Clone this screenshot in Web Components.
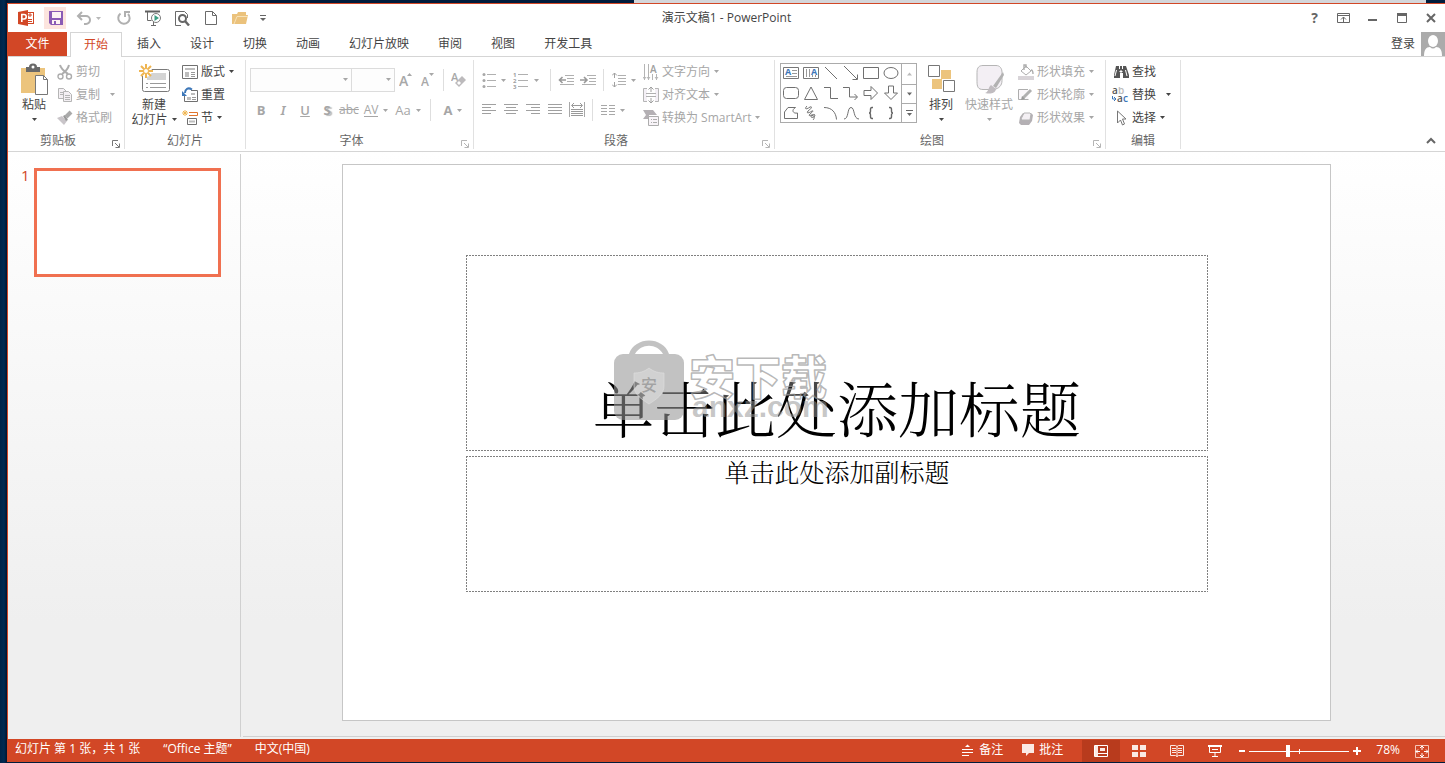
<!DOCTYPE html>
<html lang="zh-CN">
<head>
<meta charset="utf-8">
<title>演示文稿1 - PowerPoint</title>
<style>
  body {
    margin: 0;
    font: 12px/16px "Open Sans", "Noto Sans CJK SC", sans-serif;
    color: #444;
    background: #001c3c;
  }
</style>
</head>
<body>
<ppt-desktop></ppt-desktop>
<script>
/* Icon table: name -> [width, height, markup] */
const ICONS = {
  logo: [16, 16, '<rect x="8.500" y="2.500" width="7" height="11" fill="#fff" stroke="#d24726"/><path d="M10 5h4M10 9.500h4M10 11.500h4M12 3v4" stroke="#d24726" fill="none"/><path d="M0 2 10 0v16L0 14z" fill="#d24726"/><path d="M3.800 12V4.500h2.200a2 2 0 0 1 0 4.500H4" fill="none" stroke="#fff" stroke-width="1.600"/>'],
  save: [16, 16, '<path d="M1 1h14v14H3l-2-2z" fill="#8a5bb5"/><rect x="4" y="2" width="9" height="6" fill="#fdf3f3"/><rect x="4" y="10" width="8" height="4" fill="#fdf3f3"/><rect x="6" y="11" width="2" height="3" fill="#8a5bb5"/>'],
  undo: [16, 16, '<path d="M6 2 2 6l4 4M2.500 6H10a3.500 3.500 0 0 1 0 8H8" fill="none" stroke="#b0b0b0" stroke-width="2"/>'],
  redo: [16, 16, '<path d="M4.500 3.500A5.700 5.700 0 1 0 12 4" fill="none" stroke="#b0b0b0" stroke-width="2"/><path d="M9 7V2h5" fill="none" stroke="#b0b0b0" stroke-width="2"/>'],
  present: [18, 16, '<path d="M1 1.500h15" stroke="#5f5f5f" stroke-width="2"/><path d="M3.500 2v8.500h4M7 15.500h5M9.500 12v3" fill="none" stroke="#6a6a6a"/><circle cx="12" cy="8" r="4.500" fill="#fff" stroke="#7a7a7a"/><path d="M10.500 5v6l4.500-3z" fill="#3b9e83"/>'],
  preview: [16, 16, '<path d="M13.500 8V4.500l-3-3H1.500v14H7" fill="#fff" stroke="#6a6a6a"/><circle cx="8.500" cy="8.500" r="3.500" fill="#fff" stroke="#666" stroke-width="2"/><path d="m11 11 4 4.500" stroke="#666" stroke-width="2.400"/>'],
  page: [14, 16, '<path d="M1.500 1.500h7l4 4v9h-11zM8.500 1.500v4h4" fill="#fff" stroke="#6a6a6a"/>'],
  open: [18, 16, '<path d="M1 14V4h5l1-2h8v3h2l-2 9z" fill="#ebc27c"/><path d="M3 14 6 6.500h11" fill="none" stroke="#f7e2b8"/>'],
  more: [6, 8, '<path d="M0 1.500h6" stroke="#666"/><path d="M0 4h6L3 7z" fill="#666"/>'],
  optsRibbon: [13, 12, '<path d="M.5 1.500h12v9H.5zM.5 3.500h12M6.500 10V5M4 7.500l2.500-2.500L9 7.500" fill="none" stroke="#666"/>'],
  minimize: [12, 12, '<path d="M1 8h9" stroke="#666" stroke-width="2"/>'],
  maximize: [12, 12, '<path d="M1.500 1.500h9v9h-9z" fill="none" stroke="#666"/><path d="M1 2.500h10" stroke="#666" stroke-width="3"/>'],
  close: [12, 12, '<path d="m2 2 8 8M10 2l-8 8" stroke="#666" stroke-width="2"/>'],
  avatar: [24, 24, '<path d="M0 0h24v24H0z" fill="#ababab"/><ellipse cx="12" cy="9" rx="5" ry="6" fill="#fff"/><path d="M3 24c0-6 2-9 6-9 2 2 4 2 6 0 4 0 6 3 6 9z" fill="#fff"/>'],
  paste: [29, 32, '<path d="M1 5h24v25H1z" fill="#ecc47d"/><path d="M6 4h3a4 3.500 0 0 1 8 0h3v5H6z" fill="#696969"/><circle cx="13" cy="4" r="1.500" fill="#fff"/><path d="M15.500 12.500h8l4 4v15h-12z" fill="#fff" stroke="#777"/><path d="M23.500 12.500v4h4" fill="none" stroke="#777"/>'],
  cut: [16, 16, '<path d="M3 1c1 4 4 6 8 9M12 1C11 5 8 8 5 10" fill="none" stroke="#adadad" stroke-width="2"/><circle cx="3.500" cy="12.500" r="2.500" fill="#fff" stroke="#adadad" stroke-width="1.400"/><circle cx="12" cy="12.500" r="2.500" fill="#fff" stroke="#adadad" stroke-width="1.400"/>'],
  copy: [16, 16, '<path d="M1.500 1.500h5l3 3v7h-8z" fill="#f4f0f4" stroke="#b5b5b5"/><path d="M3 5.500h4M3 7.500h4" stroke="#b5b5b5"/><path d="M6.500 4.500h5l3 3v7h-8z" fill="#f4f0f4" stroke="#b5b5b5"/><path d="M8 8.500h5M8 10.500h5M8 12.500h5" stroke="#b5b5b5"/>'],
  brush: [16, 16, '<path d="m0 8 5-2 5 5-3 4z" fill="#c9c5c9"/><path d="m6 6 3 5 2-1-3-5z" fill="#999"/><path d="m9 7 5-5" stroke="#aaa" stroke-width="4"/>'],
  newSlide: [31, 30, '<rect x="3.500" y="5.500" width="27" height="22" rx="2" fill="#fff" stroke="#7a7a7a"/><path d="M8 9h19v7H8z" fill="#d4d4d4"/><path d="M7 19.500h2M11 19.500h16M7 23.500h2M11 23.500h16" stroke="#999"/><circle cx="7" cy="7" r="6" fill="#fff"/><path d="M7 0v14M0 7h14M2 2l10 10M12 2 2 12" stroke="#efb551" stroke-width="2"/><circle cx="7" cy="7" r="2.500" fill="#fff" stroke="#efb551"/>'],
  layout: [16, 16, '<path d="M.5 1.500h15v13H.5z" fill="#fff" stroke="#707070"/><path d="M3 4h10v2H3zM3 8h4v5H3z" fill="#bdbdbd"/><path d="M9 8.500h4M9 10.500h4M9 12.500h4" stroke="#999"/>'],
  reset: [16, 16, '<path d="M9 3.500h6.500v11h-13V9" fill="#fff" stroke="#707070"/><path d="M9 6h4v2H9zM5 10h4v3H5z" fill="#bdbdbd"/><path d="M10 10.500h4M10 12.500h4" stroke="#999"/><path d="M10 2.500C6 0 3 2 3 6" fill="none" stroke="#3d77b8" stroke-width="2"/><path d="M0 4v5h5z" fill="#3d77b8"/>'],
  section: [16, 16, '<path d="M3 0v6M0 3h6M1 1l4 4M5 1 1 5" stroke="#efb551"/><path d="M7 2.500h8.500v3H7" fill="none" stroke="#e0752d"/><path d="M5.500 8.500h9v6h-9z" fill="#fff" stroke="#707070"/><path d="M7 11.500h6" stroke="#bdbdbd" stroke-width="2"/>'],
  grow: [14, 16, '<text x="0" y="14" font-size="14" font-weight="600" fill="#a8a8a8">A</text><path d="M8 4h5l-2.500-3z" fill="#a8a8a8"/>'],
  shrink: [14, 16, '<text x="0" y="14" font-size="12" font-weight="600" fill="#a8a8a8">A</text><path d="M8 1h5l-2.500 3z" fill="#a8a8a8"/>'],
  eraser: [16, 16, '<text x="0" y="9" font-size="11" font-weight="600" fill="#a8a8a8">A</text><path d="m4 11 7-7 4 4-7 7z" fill="#bcbabc"/><path d="m6 11 2-2 2 2-2 2z" fill="#fff"/>'],
  bullets: [14, 16, '<g fill="#a8a8a8"><circle cx="2" cy="2.500" r="1.500"/><circle cx="2" cy="8.500" r="1.500"/><circle cx="2" cy="14.500" r="1.500"/></g><path d="M5 2.500h9M5 8.500h9M5 14.500h9" stroke="#b0b0b0"/>'],
  numbers: [16, 18, '<g font-size="6" font-weight="700" fill="#a0a0a0"><text x="0" y="6">1</text><text x="0" y="12">2</text><text x="0" y="18">3</text></g><path d="M5 3.500h10M5 9.500h10M5 15.500h10" stroke="#b0b0b0"/>'],
  outdent: [16, 12, '<path d="M7 1.500h9M9 4.500h7M9 7.500h7M2 10.500h14" stroke="#b0b0b0"/><path d="M1 6h7M4.500 3 1.500 6l3 3" fill="none" stroke="#999" stroke-width="1.600"/>'],
  indent: [16, 12, '<path d="M7 1.500h9M9 4.500h7M9 7.500h7M2 10.500h14" stroke="#b0b0b0"/><path d="M0 6h7M4 3l3 3-3 3" fill="none" stroke="#999" stroke-width="1.600"/>'],
  spacing: [14, 16, '<path d="M6 3.500h8M6 6.500h8M6 9.500h8M6 12.500h8" stroke="#b0b0b0"/><path d="M2.500 1v5M0 3.500 2.500 1 5 3.500M2.500 10v5M0 12.500 2.500 15 5 12.500" fill="none" stroke="#a0a0a0"/>'],
  left: [14, 12, '<path d="M0 .5h14M0 3.500h9M0 6.500h14M0 9.500h9" stroke="#a0a0a0"/>'],
  center: [14, 12, '<path d="M0 .5h14M2 3.500h10M0 6.500h14M2 9.500h10" stroke="#a0a0a0"/>'],
  right: [14, 12, '<path d="M0 .5h14M5 3.500h9M0 6.500h14M5 9.500h9" stroke="#a0a0a0"/>'],
  justify: [14, 12, '<path d="M0 .5h14M0 3.500h14M0 6.500h14M0 9.500h14" stroke="#a0a0a0"/>'],
  distribute: [16, 16, '<path d="M.5 0v15M15.500 0v15" stroke="#a8a8a8"/><path d="M3 3.500h10M5 1 2.500 3.500 5 6M11 1l2.500 2.500L11 6" fill="none" stroke="#999"/><path d="M2 7.500h12M2 9.500h12M2 11.500h12M2 13.500h12" stroke="#999"/>'],
  columns: [14, 12, '<path d="M0 1.500h6M0 4.500h6M0 7.500h6M0 10.500h6M8 1.500h6M8 4.500h6M8 7.500h6M8 10.500h6" stroke="#a8a8a8"/>'],
  direction: [16, 16, '<path d="M1.500 0v16M5.500 0v16M9.500 10v6M13.500 10v6" stroke="#b5b5b5"/><text x="7" y="9" font-size="10" font-weight="600" fill="#a0a0a0">A</text><path d="m0 13 1.500 2L3 13M4 13l1.500 2L7 13M12 13l1.500 2 1.500-2" fill="none" stroke="#b5b5b5"/>'],
  align: [16, 16, '<path d="M4 1.500H.5v13H4M12 1.500h3.500v13H12" fill="#f4f0f6" stroke="#b5b5b5"/><path d="M8 0v5M5.500 2.500 8 0l2.500 2.500M8 16v-5M5.500 13.500 8 16l2.500-2.500" fill="none" stroke="#a0a0a0"/><path d="M3 6.500h10M3 9.500h10" stroke="#b0b0b0"/>'],
  smartart: [16, 16, '<path d="M0 0h10l4 5H6v4H0l3-4z" fill="#b4b0b4"/><path d="M5.500 6.500h10v9h-10z" fill="#f8f4f8" stroke="#adadad"/><path d="M8 9.500h1M10 9.500h4M8 12.500h1M10 12.500h4" stroke="#adadad"/>'],
  tbox: [16, 14, '<path d="M.5 1.500h15v11H.5z" fill="#fff" stroke="#777"/><text x="2" y="9" font-size="9" font-weight="700" fill="#3d77b8">A</text><path d="M9 4.500h5M9 7.500h5M3 10.500h11" stroke="#999"/>'],
  vbox: [16, 14, '<path d="M.5 1.500h15v11H.5z" fill="#fff" stroke="#777"/><path d="M3.500 3v8M6.500 3v8M9.500 9v2M12.500 9v2" stroke="#999"/><text x="8" y="9" font-size="9" font-weight="700" fill="#3d77b8">A</text>'],
  line: [16, 16, '<path d="m2 2 12 12" stroke="#707070"/>'],
  arrow: [16, 16, '<path d="m1 1 13 13M14.500 9.500v5h-5" fill="none" stroke="#707070"/>'],
  rect: [16, 16, '<path d="M.5 2.500h15v11H.5z" fill="none" stroke="#707070"/>'],
  oval: [16, 16, '<ellipse cx="8" cy="8" rx="7" ry="5.500" fill="none" stroke="#707070"/>'],
  round: [16, 16, '<rect x=".5" y="2.500" width="15" height="11" rx="3" fill="none" stroke="#707070"/>'],
  triangle: [16, 16, '<path d="M8 2 14.500 14.500h-13z" fill="none" stroke="#707070"/>'],
  elbow: [16, 16, '<path d="M1 2.500h6.500v11H15" fill="none" stroke="#707070"/>'],
  elbowArrow: [16, 16, '<path d="M0 2.500h6.500v9.500H14M11.500 9l3 3-3 3" fill="none" stroke="#707070"/>'],
  rightArrow: [16, 16, '<path d="M1 5.500h7V1.500l6.500 6.500L8 14.500v-4H1z" fill="none" stroke="#707070"/>'],
  downArrow: [16, 16, '<path d="M5.500 1v7h-4L8 14.500 14.500 8h-4V1z" fill="none" stroke="#707070"/>'],
  freeform: [16, 16, '<path d="M5 2.500h7.500C8 5 10 9 14.500 8v5.500h-13V7z" fill="none" stroke="#707070"/>'],
  scribble: [16, 16, '<path d="M4 1C1 4 3 5 7 2c3-1 1 2-2 4-2 3 1 2 4 0 3-1-2 3-3 4 0 2 5-2 6 0 0 3-5 3-4 1 2-2 5 1 2 4" fill="none" stroke="#707070"/>'],
  arc: [16, 16, '<path d="M1 2.500c8 0 12 5 12.500 12" fill="none" stroke="#707070"/>'],
  curve: [16, 16, '<path d="M1 14C6 14 4 2.500 8 2.500S10 14 16 14" fill="none" stroke="#707070"/>'],
  lbrace: [16, 16, '<path d="M10 2.500H9Q7.500 2.500 7.500 4.500V6Q7.500 8 6 8 7.500 8 7.500 10v1.500q0 2 1.500 2h1" fill="none" stroke="#666" stroke-width="1.400"/>'],
  rbrace: [16, 16, '<path d="M6 2.500h1q1.500 0 1.500 2V6q0 2 1.500 2-1.500 0-1.500 2v1.500q0 2-1.500 2H6" fill="none" stroke="#666" stroke-width="1.400"/>'],
  up: [7, 6, '<path d="M1 4.500h5l-2.500-3z" fill="#bbb"/>'],
  down: [7, 6, '<path d="M1 1.500h5l-2.500 3z" fill="#666"/>'],
  expand: [7, 8, '<path d="M0 1.500h7" stroke="#666"/><path d="M1 4h5L3.500 7z" fill="#666"/>'],
  arrange: [28, 28, '<path d="M14 5h10v9H14zM5 14h10v10H5z" fill="#ecc47d"/><path d="M1.500.5h11v11h-11zM16.500 15.500h11v11h-11z" fill="#fff" stroke="#777"/>'],
  styles: [30, 32, '<path d="M9 2.500h13c4 0 6 3 6 7v8c0 5-3 8-8 9H9c-5 0-6-3-6-8v-9c0-5 2-7 6-7z" fill="#f3eff4" stroke="#b5b5b5"/><path d="M29 9 19 23l3 2 8-13z" fill="#b2b2b2"/><path d="m17 22 5 4c-1 5-6 5-11 4 4-1 3-6 6-8z" fill="#c0bcc0"/>'],
  fill: [16, 16, '<path d="M0 12h16v4H0z" fill="#d8d4d8"/><path d="m3 7 5-5 5 5-5 4z" fill="#fff" stroke="#adadad"/><path d="M6 6V1h2v3M13 6c2 0 2 2 2 4" fill="none" stroke="#adadad" stroke-width="1.400"/>'],
  outline: [16, 16, '<path d="M10 2.500H.5v10h10" fill="#faf7fa" stroke="#adadad"/><path d="m5 11 8-8" stroke="#b0b0b0" stroke-width="3"/><path d="m3 13 1-4 3 3z" fill="#999"/>'],
  effects: [16, 16, '<path d="M5 3h8l2 2-1 6-3 4H3l-2-2 1-6z" fill="#b4b0b4"/><path d="M6 3h6l1 1-1 6H4L3 9z" fill="#f4f0f4" stroke="#b4b4b4"/>'],
  find: [16, 16, '<path d="M3 2h3v3h1V2h2v3h1V2h3l3 9v3h-6v-5H7v5H1v-3z" fill="#555"/><path d="M3.500 6 2 12M12.500 6 14 12M7 7v1h2V7z" stroke="#fff" fill="#fff"/>'],
  replace: [18, 16, '<g font-size="10" font-weight="600"><text x="0" y="7" fill="#555">a</text><text x="6" y="7" fill="#bbb">b</text><text x="5" y="15" fill="#555">a</text><text x="11" y="15" fill="#3d77b8">c</text></g><path d="M.5 9v3h3M2 10l2 2-2 2" stroke="#3d77b8" fill="none"/>'],
  select: [16, 16, '<path d="M4.500 1v12l3-3 2 5 2-1-2-5h3.500z" fill="#fff" stroke="#777"/>'],
  launcher: [8, 8, '<path d="M.5 6V.5H6M3 3l4 4M7.500 3.500v4h-4" fill="none" stroke="currentColor"/>'],
  collapse: [10, 8, '<path d="m1 6 4-4 4 4" fill="none" stroke="#666" stroke-width="2"/>'],
  notes: [12, 12, '<path d="M0 5.500h11M0 8.500h11M0 11.500h7" stroke="#fff"/><path d="M3 3h5L5.500.500z" fill="#fff"/>'],
  comment: [12, 12, '<path d="M0 0h12v9H7l-3 3V9H0z" fill="#fbe9e4"/>'],
  normal: [14, 14, '<path d="M.5 1.500h13v11H.5zM4 9.500h9" fill="none" stroke="#fff"/><path d="M1 2h3v10H1zM6 4h5v3H6z" fill="#fbe9e4"/>'],
  sorter: [14, 12, '<path d="M0 0h6v5H0zM8 0h6v5H8zM0 7h6v5H0zM8 7h6v5H8z" fill="#fbe9e4"/>'],
  reading: [14, 12, '<path d="M.5.500h5L7 1.500 8.500.500h5v10h-5L7 11.500l-1.500-1h-5zM7 1v11M2 3.500h4M2 5.500h4M2 7.500h4M8 3.500h4M8 5.500h4M8 7.500h4" fill="none" stroke="#fbe9e4"/>'],
  show: [14, 12, '<path d="M0 1h14" stroke="#fff" stroke-width="2"/><path d="M1.500 2v5.500h11V2M7 8v3M4 11.500h6M4 4.500h6" fill="none" stroke="#fff"/>'],
  minus: [6, 6, '<path d="M0 3h6" stroke="#fff" stroke-width="2"/>'],
  plus: [8, 8, '<path d="M0 4h8M4 0v8" stroke="#fff" stroke-width="2"/>'],
  fit: [14, 14, '<path d="M.5 1.500h13v12H.5z" fill="none" stroke="#f5c5b8"/><path d="M7 2v4M7 9v4M1 7.500h4M9 7.500h4M5 4l2-2 2 2M5 11l2 2 2-2M3 5.500l-2 2 2 2M11 5.500l2 2-2 2" fill="none" stroke="#fff"/>']
};

/* Registers an element whose shadow root is filled by render(host). */
function define(name, render) {
  customElements.define(name, class extends HTMLElement {
    connectedCallback() {
      if (this.shadowRoot) return;
      this.attachShadow({ mode: 'open' }).innerHTML = render(this);
    }
  });
}
const icon = name => `<ppt-icon name="${name}"></ppt-icon>`;
const BUTTON = `
  button { font: inherit; color: inherit; background: none; border: 0; padding: 0; margin: 0;
    display: flex; align-items: center; justify-content: center; white-space: nowrap; }
`;

define('ppt-icon', host => {
  const [w, h, body] = ICONS[host.getAttribute('name')];
  return `<style>:host { display: block; flex: none; } svg { display: block; }</style>
    <svg width="${w}" height="${h}" viewBox="0 0 ${w} ${h}" aria-hidden="true">${body}</svg>`;
});

define('ppt-caret', () => `
  <style>:host { display: block; flex: none; } svg { display: block; }</style>
  <svg width="5" height="3" viewBox="0 0 5 3" aria-hidden="true"><path d="M0 0h5L2.500 3z" fill="currentColor"/></svg>`);

/* Compact command without visible label, or with a letter as its face */
define('icon-button', host => `
  <style>
    :host { display: block; flex: none; color: #666; }
    ${BUTTON}
    button { width: var(--w, 22px); height: var(--h, 22px); gap: 5px; }
  </style>
  <button type="button" aria-label="${host.getAttribute('label')}" ${host.hasAttribute('disabled') ? 'disabled' : ''}>
    <slot></slot>${host.hasAttribute('menu') ? '<ppt-caret></ppt-caret>' : ''}
  </button>`);

/* Icon beside a label */
define('tool-button', host => `
  <style>
    :host { display: block; }
    :host([disabled]) { color: #a6a6a6; }
    ${BUTTON}
    button { height: 23px; gap: 3px; justify-content: flex-start; }
    .icon { width: 16px; display: flex; justify-content: center; }
    ppt-caret { margin-left: var(--caret-gap, 1px); }
  </style>
  <button type="button" ${host.hasAttribute('disabled') ? 'disabled' : ''}>
    <span class="icon">${icon(host.getAttribute('icon'))}</span>
    <slot></slot>${host.hasAttribute('menu') ? '<ppt-caret></ppt-caret>' : ''}
  </button>`);

/* Large icon above a label of one or two lines */
define('big-button', host => `
  <style>
    :host { display: block; flex: none; width: var(--big-width, 48px); }
    :host([disabled]) { color: #a6a6a6; }
    ${BUTTON}
    button { width: 100%; flex-direction: column; }
    .icon { height: 37px; display: flex; align-items: center; }
    .row { height: 15px; display: flex; align-items: center; gap: 4px; }
  </style>
  <button type="button" ${host.hasAttribute('disabled') ? 'disabled' : ''}>
    <span class="icon">${icon(host.getAttribute('icon'))}</span>
    <span class="row"><slot></slot></span>
    <span class="row"><slot name="second"></slot><ppt-caret></ppt-caret></span>
  </button>`);

define('ribbon-group', host => `
  <style>
    :host { display: grid; grid-template-rows: 73px 16px; flex: none; box-sizing: border-box;
      width: var(--group-width); border-right: 1px solid #e1e1e1; }
    .body { display: flex; align-items: flex-start; padding-left: var(--pad, 4px); }
    .foot { display: flex; color: #666; }
    .label { flex: 1; text-align: center; }
    ${BUTTON}
    button { width: 16px; height: 16px; padding-top: 6px; color: ${host.hasAttribute('dim') ? '#b5b5b5' : '#777'}; }
  </style>
  <div class="body"><slot></slot></div>
  <div class="foot"><span class="label">${host.getAttribute('label')}</span>
    ${host.hasAttribute('launcher') ? `<button type="button" aria-label="${host.getAttribute('label')}">${icon('launcher')}</button>` : ''}
  </div>`);

define('title-bar', () => `
  <style>
    :host { display: grid; grid-template-columns: 1fr auto 1fr; align-items: center; height: 28px; }
    .quick { display: flex; align-items: center; gap: 11px; padding-left: 10px; }
    .quick ppt-icon:first-child { margin-right: -1px; }
    .quick icon-button { --w: 18px; }
    .quick .save { --w: 22px; background: #fce4de; }
    .quick .undo { --w: 26px; color: #b8b8b8; margin: 0 2px 0 -2px; }
    .quick .more { --w: 6px; }
    h1 { margin: 0; font: inherit; }
    .sys { display: flex; justify-content: flex-end; }
    .sys icon-button { --w: 29px; --h: 28px; }
    .help { font-weight: 700; font-size: 14px; }
  </style>
  <div class="quick">
    ${icon('logo')}
    <icon-button class="save" label="保存">${icon('save')}</icon-button>
    <icon-button class="undo" label="撤消" menu>${icon('undo')}</icon-button>
    <icon-button label="重复">${icon('redo')}</icon-button>
    <icon-button label="从头开始">${icon('present')}</icon-button>
    <icon-button label="打印预览">${icon('preview')}</icon-button>
    <icon-button label="新建">${icon('page')}</icon-button>
    <icon-button label="打开">${icon('open')}</icon-button>
    <icon-button class="more" label="自定义">${icon('more')}</icon-button>
  </div>
  <h1>演示文稿1 - PowerPoint</h1>
  <div class="sys">
    <icon-button class="help" label="帮助">?</icon-button>
    <icon-button label="功能区选项">${icon('optsRibbon')}</icon-button>
    <icon-button label="最小化">${icon('minimize')}</icon-button>
    <icon-button label="最大化">${icon('maximize')}</icon-button>
    <icon-button label="关闭">${icon('close')}</icon-button>
  </div>`);

define('ribbon-tabs', () => `
  <style>
    :host { display: flex; height: 24px; border-bottom: 1px solid #d5d5d5; }
    ${BUTTON}
    button { height: 24px; padding: 0 14px; margin-right: 1px; box-sizing: border-box; }
    .file { width: 59px; margin-right: 3px; background: #d24726; color: #fff; }
    .on { height: 25px; padding: 0 13px; color: #d24726; background: #fff; border: 1px solid #d5d5d5; border-bottom: 0; }
    .user { margin-left: auto; display: flex; align-items: center; gap: 6px; }
    a { color: inherit; text-decoration: none; }
  </style>
  <button type="button" class="file">文件</button>
  <button type="button" class="on">开始</button>
  ${['插入', '设计', '切换', '动画', '幻灯片放映', '审阅', '视图', '开发工具'].map(t => `<button type="button">${t}</button>`).join('')}
  <div class="user"><a href="#login">登录</a>${icon('avatar')}</div>`);

define('shape-gallery', () => `
  <style>
    :host { display: flex; flex: none; height: 58px; margin-top: 3px; border: 1px solid #ababab; }
    .cells { display: grid; grid-template-columns: repeat(6, 20px); grid-template-rows: repeat(3, 20px); }
    ${BUTTON}
    .cells button { height: 18px; }
    .scroll { display: grid; grid-template-rows: 20px 19px 19px; border-left: 1px solid #ababab; }
    .scroll button { width: 14px; }
    .scroll button + button { border-top: 1px solid #ababab; }
  </style>
  <div class="cells">
    ${['tbox', 'vbox', 'line', 'arrow', 'rect', 'oval', 'round', 'triangle', 'elbow', 'elbowArrow', 'rightArrow', 'downArrow',
       'freeform', 'scribble', 'arc', 'curve', 'lbrace', 'rbrace'].map(n => `<button type="button" aria-label="${n}">${icon(n)}</button>`).join('')}
  </div>
  <div class="scroll">
    <button type="button" aria-label="上移">${icon('up')}</button>
    <button type="button" aria-label="下移">${icon('down')}</button>
    <button type="button" aria-label="更多">${icon('expand')}</button>
  </div>`);

define('ppt-ribbon', () => `
  <style>
    :host { display: flex; padding: 3px 0 2px; border-bottom: 1px solid #d5d5d5; background: #fff; }
    .rows { display: grid; row-gap: 6px; padding-top: 8px; }
    .row { display: flex; align-items: center; height: 24px; }
    .sep { width: 1px; height: 22px; background: #dedede; }
    .dim icon-button { color: #a6a6a6; }
    .combo { display: block; position: relative; color: #a6a6a6; }
    .combo ppt-caret { position: absolute; right: 4px; top: 10px; }
    select { display: block; appearance: none; box-sizing: border-box; width: 102px; height: 24px; border: 1px solid #dcdcdc;
      background: #fdfdfd; border-radius: 0; opacity: 1; }
    .size { margin-left: -1px; }
    .size select { width: 44px; }
    b, i, u, s, icon-button span { font-size: 13px; }
    i, u { font-weight: 600; }
    i { font-family: "Noto Sans", sans-serif; }
    .shadow { font-weight: 700; text-shadow: 2px 1px 1px #bbb; }
    icon-button s { font-size: 12px; }
    icon-button .av { font-size: 12px; line-height: 11px; border-bottom: 1px solid #a6a6a6; padding-bottom: 1px; }
    .wide { --w: 32px; }
    .end { margin-left: auto; align-self: flex-end; --w: 28px; --h: 16px; }
    .tools { margin-left: 3px; }
  </style>
  <ribbon-group label="剪贴板" launcher style="--group-width:117px;--pad:12px">
    <big-button icon="paste" style="--big-width:28px">粘贴</big-button>
    <div style="margin-left:9px">
      <tool-button icon="cut" disabled>剪切</tool-button>
      <tool-button icon="copy" disabled menu style="--caret-gap:7px">复制</tool-button>
      <tool-button icon="brush" disabled>格式刷</tool-button>
    </div>
  </ribbon-group>
  <ribbon-group label="幻灯片" style="--group-width:121px">
    <big-button icon="newSlide" style="--big-width:50px">新建<span slot="second">幻灯片</span></big-button>
    <div class="tools">
      <tool-button icon="layout" menu>版式</tool-button>
      <tool-button icon="reset">重置</tool-button>
      <tool-button icon="section" menu>节</tool-button>
    </div>
  </ribbon-group>
  <ribbon-group label="字体" launcher dim class="dim" style="--group-width:228px">
    <div class="rows">
      <div class="row">
        <label class="combo"><select aria-label="字体" disabled></select><ppt-caret></ppt-caret></label>
        <label class="combo size"><select aria-label="字号" disabled></select><ppt-caret></ppt-caret></label>
        <icon-button label="增大字号" disabled>${icon('grow')}</icon-button>
        <icon-button label="减小字号" disabled>${icon('shrink')}</icon-button>
        <div class="sep" style="margin:0 4px"></div>
        <icon-button label="清除格式" disabled>${icon('eraser')}</icon-button>
      </div>
      <div class="row">
        <icon-button label="加粗" disabled><b>B</b></icon-button>
        <icon-button label="倾斜" disabled><i>I</i></icon-button>
        <icon-button label="下划线" disabled><u>U</u></icon-button>
        <icon-button label="文字阴影" disabled><span class="shadow">S</span></icon-button>
        <icon-button label="删除线" disabled><s>abc</s></icon-button>
        <icon-button class="wide" label="字符间距" disabled menu><span class="av">AV</span></icon-button>
        <icon-button class="wide" label="更改大小写" disabled menu><span>Aa</span></icon-button>
        <div class="sep" style="margin:0 6px"></div>
        <icon-button class="wide" label="字体颜色" disabled menu><b>A</b></icon-button>
      </div>
    </div>
  </ribbon-group>
  <ribbon-group label="段落" launcher dim class="dim" style="--group-width:301px">
    <div class="rows">
      <div class="row">
        <icon-button class="wide" label="项目符号" disabled menu>${icon('bullets')}</icon-button>
        <icon-button class="wide" label="编号" disabled menu>${icon('numbers')}</icon-button>
        <div class="sep" style="margin:0 4px 0 8px"></div>
        <icon-button label="降低列表级别" disabled>${icon('outdent')}</icon-button>
        <icon-button label="提高列表级别" disabled>${icon('indent')}</icon-button>
        <div class="sep" style="margin:0 4px"></div>
        <icon-button class="wide" label="行距" disabled menu>${icon('spacing')}</icon-button>
      </div>
      <div class="row">
        <icon-button label="左对齐" disabled>${icon('left')}</icon-button>
        <icon-button label="居中" disabled>${icon('center')}</icon-button>
        <icon-button label="右对齐" disabled>${icon('right')}</icon-button>
        <icon-button label="两端对齐" disabled>${icon('justify')}</icon-button>
        <icon-button label="分散对齐" disabled>${icon('distribute')}</icon-button>
        <div class="sep" style="margin:0 4px"></div>
        <icon-button class="wide" label="分栏" disabled menu>${icon('columns')}</icon-button>
      </div>
    </div>
    <div class="tools">
      <tool-button icon="direction" disabled menu>文字方向</tool-button>
      <tool-button icon="align" disabled menu>对齐文本</tool-button>
      <tool-button icon="smartart" disabled menu>转换为 SmartArt</tool-button>
    </div>
  </ribbon-group>
  <ribbon-group label="绘图" launcher dim style="--group-width:331px;--pad:5px">
    <shape-gallery></shape-gallery>
    <big-button icon="arrange">排列</big-button>
    <big-button icon="styles" disabled>快速样式</big-button>
    <div style="margin-left:5px">
      <tool-button icon="fill" disabled menu>形状填充</tool-button>
      <tool-button icon="outline" disabled menu>形状轮廓</tool-button>
      <tool-button icon="effects" disabled menu>形状效果</tool-button>
    </div>
  </ribbon-group>
  <ribbon-group label="编辑" style="--group-width:75px;--pad:7px">
    <div>
      <tool-button icon="find">查找</tool-button>
      <tool-button icon="replace" menu style="--caret-gap:7px">替换</tool-button>
      <tool-button icon="select" menu>选择</tool-button>
    </div>
  </ribbon-group>
  <icon-button class="end" label="折叠功能区">${icon('collapse')}</icon-button>`);

define('slide-thumbnails', () => `
  <style>
    :host { display: block; width: 233px; flex: none; box-sizing: border-box; margin: 2px 0; border-right: 1px solid #d0d0d0; }
    ol { list-style: none; margin: 0; padding: 14px 19px 0 13px; }
    li { display: flex; gap: 4px; color: #d24726; font-size: 15px; line-height: 14px; }
    button { flex: 1; aspect-ratio: 187 / 109; padding: 0; background: #fff; border: 3px solid #f07050; }
  </style>
  <ol><li>1<button type="button" aria-label="幻灯片 1"></button></li></ol>`);

define('site-watermark', () => `
  <style>:host { display: block; } svg { display: block; }</style>
  <svg width="216" height="84" viewBox="0 0 216 84" font-family="Noto Sans CJK SC, sans-serif">
    <path d="M16 15C22-3 50-3 56 15h-6C44 4 28 4 22 15z" fill="#969696" fill-opacity=".58"/>
    <rect x="1" y="15" width="70" height="66" rx="9" fill="#969696" fill-opacity=".58"/>
    <path d="M36 29c5 4 10 5 15 5v13c0 8-7 13-15 18-8-5-15-10-15-18V34c5 0 10-1 15-5z" fill="#fff" fill-opacity=".25" stroke="#ddd" stroke-opacity=".7"/>
    <text x="28" y="52" font-size="16" font-weight="500" fill="#969696" fill-opacity=".8">安</text>
    <text x="76" y="55" font-size="46" font-weight="900" fill="#fff" fill-opacity=".3" stroke="#999" stroke-opacity=".7" stroke-width="1.500" stroke-linejoin="round">安下载</text>
    <text x="79" y="78" font-family="Liberation Sans" font-size="30" font-weight="700" fill="#969696" fill-opacity=".55">anxz.com</text>
  </svg>`);

define('slide-placeholder', () => `
  <style>
    :host { display: flex; justify-content: center; box-sizing: border-box; min-height: 0; padding: 1px;
      --dash: #808080 0 2px, transparent 2px 3px;
      background:
        repeating-linear-gradient(90deg, var(--dash)) top / 100% 1px no-repeat,
        repeating-linear-gradient(90deg, var(--dash)) bottom / 100% 1px no-repeat,
        repeating-linear-gradient(var(--dash)) left / 1px 100% no-repeat,
        repeating-linear-gradient(var(--dash)) right / 1px 100% no-repeat;
      color: #000; font-family: "Noto Serif CJK SC", "Noto Sans CJK SC", serif; font-weight: 300; }
    :host([kind=title]) { align-items: flex-end; padding-bottom: 8px; font-size: 61px; line-height: 72px; }
    :host([kind=subtitle]) { align-items: flex-start; font-size: 25px; line-height: 28px; }
  </style>
  <slot></slot>`);

define('slide-editor', () => `
  <style>
    :host { display: block; flex: 1; margin: 0 0 2px 2px; padding: 12px 114px 15px 99px; border-bottom: 1px solid #d0d0d0; }
    .slide { position: relative; box-sizing: border-box; aspect-ratio: 989 / 557; background: #fff; border: 1px solid #c6c6c6;
      display: grid; grid-template-columns: 123fr 742fr 122fr; grid-template-rows: 90fr 196fr 5fr 136fr 128fr; }
    slide-placeholder { grid-column: 2; }
    [kind=title] { grid-row: 2; }
    [kind=subtitle] { grid-row: 4; }
    site-watermark { position: absolute; left: 270px; top: 174px; }
  </style>
  <section class="slide">
    <slide-placeholder kind="title">单击此处添加标题</slide-placeholder>
    <slide-placeholder kind="subtitle">单击此处添加副标题</slide-placeholder>
    <site-watermark></site-watermark>
  </section>`);

define('zoom-slider', () => `
  <style>
    :host { display: flex; align-items: center; gap: 4px; margin-left: 5px; }
    ${BUTTON}
    button { height: 22px; }
    input { appearance: none; display: block; width: 100px; height: 12px; margin: 0;
      background: linear-gradient(#fff, #fff) 50px 4px / 1px 5px no-repeat, linear-gradient(#fff, #fff) 0 6px / 100% 1px no-repeat; }
    input::-webkit-slider-thumb { appearance: none; width: 4px; height: 12px; background: #fff; }
  </style>
  <button type="button" aria-label="缩小">${icon('minus')}</button>
  <input type="range" aria-label="缩放" min="0" max="100" value="38">
  <button type="button" aria-label="放大">${icon('plus')}</button>`);

define('status-bar', () => `
  <style>
    :host { display: flex; align-items: center; height: 23px; padding: 0 16px 0 7px; color: #fff; background: #d24726; }
    .info { display: flex; gap: 23px; margin-right: auto; line-height: 20px; height: 23px; }
    ${BUTTON}
    .text { height: 23px; gap: 5px; margin-right: 19px; padding-bottom: 2px; }
    .views { display: flex; }
    .views icon-button { --w: 38px; }
    .views .on { background: #b83b1d; }
    .pct { margin: 0 15px 0 15px; padding-bottom: 2px; }
  </style>
  <div class="info"><span>幻灯片 第 1 张，共 1 张</span><span>“Office 主题”</span><span>中文(中国)</span></div>
  <button type="button" class="text">${icon('notes')}备注</button>
  <button type="button" class="text">${icon('comment')}批注</button>
  <div class="views">
    <icon-button class="on" label="普通视图">${icon('normal')}</icon-button>
    <icon-button label="幻灯片浏览">${icon('sorter')}</icon-button>
    <icon-button label="阅读视图">${icon('reading')}</icon-button>
    <icon-button label="幻灯片放映">${icon('show')}</icon-button>
  </div>
  <zoom-slider></zoom-slider>
  <button type="button" class="pct">78%</button>
  <button type="button" aria-label="适应窗口">${icon('fit')}</button>`);

/* Desktop edge that shows round the application window */
define('ppt-desktop', () => `
  <style>
    :host { display: flex; flex-direction: column; box-sizing: border-box; min-height: 100vh; padding: 0 0 1px 7px;
      background: linear-gradient(90deg, #002347, #002a52 4px, #001530 7px, #001c3c 8px); }
    .behind { height: 3px; margin: 0 19px 0 627px; background: #d4d6da; }
    main { flex: 1; display: flex; flex-direction: column; border: solid #d24726; border-width: 1px 0 0 1px; background: #fff; }
    .work { flex: 1; display: flex; background: linear-gradient(#fff, #efefef 80%); }
  </style>
  <div class="behind"></div>
  <main>
    <title-bar></title-bar>
    <ribbon-tabs></ribbon-tabs>
    <ppt-ribbon></ppt-ribbon>
    <div class="work"><slide-thumbnails></slide-thumbnails><slide-editor></slide-editor></div>
    <status-bar></status-bar>
  </main>`);
</script>
</body>
</html>
